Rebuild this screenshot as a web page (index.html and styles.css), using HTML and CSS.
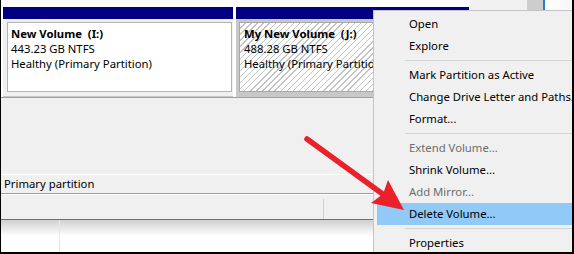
FILE: index.html
```html
<!DOCTYPE html>
<html lang="en">
<head>
    <meta charset="UTF-8">
    <title>Disk Management</title>
    <link rel="stylesheet" href="styles.css">
</head>
<body>
<div class="screen">

    <!-- Disk row with partitions -->
    <div class="disk">
        <div class="part">
            <div class="part-head"></div>
            <div class="part-body">
                <div class="vol">
                    <div class="vol-name">New Volume&nbsp;&nbsp;(I:)</div>
                    <div>443.23 GB NTFS</div>
                    <div>Healthy (Primary Partition)</div>
                </div>
            </div>
        </div>
        <div class="part part-selected">
            <div class="part-head"></div>
            <div class="part-body">
                <div class="vol vol-hatched">
                    <div class="vol-name">My New Volume&nbsp;&nbsp;(J:)</div>
                    <div>488.28 GB NTFS</div>
                    <div>Healthy (Primary Partition)</div>
                </div>
            </div>
        </div>
        <div class="side">
            <div class="side-strip">
                <div class="strip-light"></div>
                <div class="strip-thumb"></div>
                <div class="strip-blue"></div>
                <div class="strip-white"></div>
            </div>
        </div>
    </div>

    <div class="blank"></div>

    <!-- Legend -->
    <div class="legend">Primary partition</div>

    <!-- Status bar -->
    <div class="status">
        <div class="status-cell"></div>
    </div>

    <!-- List below -->
    <div class="list">
        <div class="list-col"></div>
    </div>

    <!-- Context menu -->
    <div class="menu">
        <div class="item">Open</div>
        <div class="item">Explore</div>
        <div class="sep"></div>
        <div class="item">Mark Partition as Active</div>
        <div class="item">Change Drive Letter and Paths...</div>
        <div class="item">Format...</div>
        <div class="sep"></div>
        <div class="item disabled">Extend Volume...</div>
        <div class="item">Shrink Volume...</div>
        <div class="item disabled">Add Mirror...</div>
        <div class="item active">Delete Volume...</div>
        <div class="sep"></div>
        <div class="item">Properties</div>
    </div>

    <!-- Red pointer arrow -->
    <svg class="arrow" width="574" height="254" viewBox="0 0 574 254">
        <line x1="307" y1="139" x2="384" y2="195" stroke="#e8212a" stroke-width="5.5" stroke-linecap="round"/>
        <polygon points="404,210 371,203 383,194 388,180" fill="#e8212a"/>
    </svg>
</div>
</body>
</html>
```

FILE: styles.css
```css
* {
    box-sizing: border-box;
}

body {
    margin: 0;
    width: 574px;
    height: 254px;
    overflow: hidden;
    font-family: "Segoe UI", "Noto Sans", sans-serif;
    font-size: 11.3px;
    color: #000;
}

.screen {
    position: relative;
    width: 574px;
    height: 254px;
    border: solid #000;
    border-width: 0 2px 2px 1px;
    background: #f0f0f0;
    overflow: hidden;
    display: flex;
    flex-direction: column;
}

/* Disk row */
.disk {
    display: flex;
    height: 98px;
    padding-left: 2px;
    gap: 3px;
    background: #fff;
    border-bottom: 1px solid #a0a0a0;
}

.part {
    width: 230px;
    margin-top: 7px;
    display: flex;
    flex-direction: column;
}

.part-selected {
    width: 233px;
}

.part-head {
    height: 12px;
    background: #000080;
}

.part-body {
    flex: 1;
    padding: 3px 1px 2px 4px;
    background: #f0f0f0;
    border-bottom: 1px solid #c8c8c8;
}

.part-selected .part-body {
    padding: 3px;
    background: #c8c8c8;
}

.vol {
    height: 70px;
    padding: 3px 0 0 3px;
    background: #fff;
    border: 1px solid #b4b4b4;
    line-height: 15px;
    white-space: nowrap;
    overflow: hidden;
}

.vol-hatched {
    padding-left: 4px;
    border-color: #a8a8a8;
    background: repeating-linear-gradient(135deg, #fff 0, #fff 3.3px, #c4c4c4 3.3px, #c4c4c4 4.3px);
}

.vol-name {
    font-weight: bold;
}

.side {
    flex: 1;
    margin-left: -3px;
    background: #f0f0f0;
}

.side-strip {
    display: flex;
    height: 10px;
}

.strip-light {
    flex: 1;
    border-left: 1px solid #fff;
    background: #f0f0f0;
}

.strip-thumb {
    width: 16px;
    background: #cdcdcd;
}

.strip-blue {
    width: 2px;
    background: #2b79d0;
}

.strip-white {
    width: 27px;
    background: linear-gradient(90deg, #fff, #f6f6f6);
}

/* Middle area */
.blank {
    height: 76px;
}

.legend {
    height: 20px;
    padding-left: 3px;
    line-height: 18px;
    border-top: 1px solid #fff;
    border-bottom: 1px solid #a0a0a0;
}

.status {
    height: 26px;
    padding-top: 4px;
    border-top: 1px solid #fff;
    border-bottom: 1px solid #2f7dd0;
}

.status-cell {
    width: 323px;
    height: 20px;
    border-right: 1px solid #d0d0d0;
}

.list {
    flex: 1;
    background: linear-gradient(#d0d0d0, #fff 16px);
}

.list-col {
    width: 59px;
    height: 100%;
    border-right: 1px solid #e6e6e6;
}

/* Context menu */
.menu {
    position: absolute;
    left: 372px;
    top: 10px;
    width: 230px;
    padding: 2px 0 2px 3px;
    background: #f0f0f0;
    border: 1px solid #c4c4c4;
}

.item {
    height: 22px;
    line-height: 22px;
    padding-left: 32px;
    white-space: nowrap;
}

.item.disabled {
    color: #6d6d6d;
}

.item.active {
    background: #91c9f7;
}

.sep {
    height: 1px;
    margin: 3px 0 3px 28px;
    background: #d4d4d4;
}

.arrow {
    position: absolute;
    left: -1px;
    top: 0;
    pointer-events: none;
}
```
